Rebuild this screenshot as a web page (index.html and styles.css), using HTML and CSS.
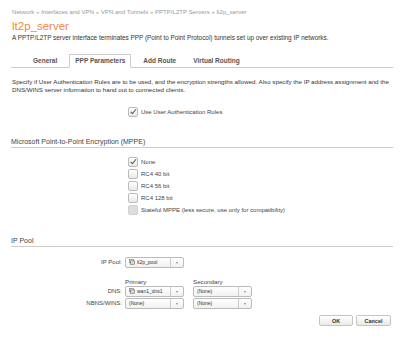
FILE: index.html
```html
<!DOCTYPE html>
<html>
<head>
<meta charset="utf-8">
<link rel="stylesheet" href="styles.css">
</head>
<body>
<div class="page">
  <div class="crumbs">Network <span class="sep">»</span> Interfaces and VPN <span class="sep">»</span> VPN and Tunnels <span class="sep">»</span> PPTP/L2TP Servers <span class="sep">»</span> lt2p_server</div>
  <h1 class="title">lt2p_server</h1>
  <p class="desc">A PPTP/L2TP server interface terminates PPP (Point to Point Protocol) tunnels set up over existing IP networks.</p>

  <div class="tabs">
    <div class="tab">General</div>
    <div class="tab active">PPP Parameters</div>
    <div class="tab">Add Route</div>
    <div class="tab last">Virtual Routing</div>
  </div>

  <p class="help">Specify if User Authentication Rules are to be used, and the encryption strengths allowed. Also specify the IP address assignment and the DNS/WINS server information to hand out to connected clients.</p>

  <div class="checks first">
    <label class="check"><span class="box checked"></span>Use User Authentication Rules</label>
  </div>

  <h2 class="section mppe">Microsoft Point-to-Point Encryption (MPPE)</h2>
  <div class="checks">
    <label class="check"><span class="box checked"></span>None</label>
    <label class="check"><span class="box"></span>RC4 40 bit</label>
    <label class="check"><span class="box"></span>RC4 56 bit</label>
    <label class="check"><span class="box"></span>RC4 128 bit</label>
    <label class="check"><span class="box disabled"></span>Stateful MPPE (less secure, use only for compatibility)</label>
  </div>

  <h2 class="section pool">IP Pool</h2>
  <div class="form">
    <div class="row">
      <span class="lbl">IP Pool:</span>
      <span class="sel"><span class="val"><svg class="ico" viewBox="0 0 8 8"><rect x="0.5" y="0.5" width="5.5" height="4.5" fill="#eee" stroke="#777" stroke-width="0.8"/><rect x="2" y="2.5" width="5.5" height="4.5" fill="#ddd" stroke="#666" stroke-width="0.8"/></svg>lt2p_pool</span><span class="arr"></span></span>
    </div>
    <div class="row heads">
      <span class="lbl"></span>
      <span class="colhead">Primary</span>
      <span class="colhead">Secondary</span>
    </div>
    <div class="row tight">
      <span class="lbl">DNS:</span>
      <span class="sel"><span class="val"><svg class="ico" viewBox="0 0 8 8"><rect x="0.5" y="0.5" width="5.5" height="4.5" fill="#eee" stroke="#777" stroke-width="0.8"/><rect x="2" y="2.5" width="5.5" height="4.5" fill="#ddd" stroke="#666" stroke-width="0.8"/></svg>wan1_dns1</span><span class="arr"></span></span>
      <span class="sel"><span class="val">(None)</span><span class="arr"></span></span>
    </div>
    <div class="row tight">
      <span class="lbl">NBNS/WINS:</span>
      <span class="sel"><span class="val">(None)</span><span class="arr"></span></span>
      <span class="sel"><span class="val">(None)</span><span class="arr"></span></span>
    </div>
  </div>

  <div class="buttons">
    <button class="btn ok">OK</button>
    <button class="btn">Cancel</button>
  </div>
</div>
</body>
</html>
```

FILE: styles.css
```css
html, body {
  margin: 0;
  padding: 0;
  background: #fff;
}
body {
  font-family: "Liberation Sans", Arial, sans-serif;
  color: #333;
  font-size: 6px;
}
.page {
  padding: 8px 7px 0 12px;
}
.crumbs {
  font-size: 6.1px;
  color: #999;
  line-height: 7px;
}
.crumbs .sep {
  color: #aaa;
}
.title {
  margin: 4px 0 0 0;
  font-size: 11.5px;
  font-weight: normal;
  color: #f0883a;
  line-height: 14px;
}
.desc {
  margin: 1px 0 0 0;
  font-size: 6.4px;
  line-height: 8px;
  color: #333;
}
.tabs {
  margin: 12px 0 0 -1px;
  display: flex;
  border-bottom: 1px solid #ccc;
  height: 13px;
  padding-left: 22px;
  gap: 12px;
}
.tab {
  font-size: 6.5px;
  font-weight: bold;
  color: #555;
  line-height: 13px;
  padding: 0;
}
.tab.active {
  border: 1px solid #ccc;
  border-bottom: 1px solid #fff;
  background: #fff;
  line-height: 12px;
  height: 12px;
  padding: 0 5px;
  margin-bottom: -1px;
}
.tab.last {
  margin-left: 5px;
}
.help {
  margin: 10px 0 0 0;
  font-size: 6.2px;
  line-height: 8px;
  color: #333;
}
.checks {
  display: flex;
  flex-direction: column;
  padding-left: 116px;
  gap: 3px;
}
.checks.first {
  margin-top: 13px;
}
.check {
  display: flex;
  align-items: center;
  gap: 3px;
  height: 9px;
  font-size: 6px;
  color: #444;
}
.box {
  width: 8px;
  height: 8px;
  border: 1px solid #bbb;
  border-radius: 2px;
  background: linear-gradient(#fff, #e8e8e8);
  position: relative;
  flex: none;
}
.box.checked::after {
  content: "";
  position: absolute;
  left: 2.5px;
  top: 0.5px;
  width: 2px;
  height: 4.5px;
  border: solid #555;
  border-width: 0 1.2px 1.2px 0;
  transform: rotate(40deg);
}
.box.disabled {
  background: #ddd;
  border-color: #d0d0d0;
}
.section {
  margin: 21px 0 0 -1px;
  font-size: 7px;
  font-weight: normal;
  color: #444;
  line-height: 9px;
  border-bottom: 1px solid #ccc;
  padding-bottom: 1px;
}
.section + .checks {
  margin-top: 9px;
}
.section.pool {
  margin-top: 22px;
}
.form {
  margin-top: 9px;
  display: flex;
  flex-direction: column;
}
.row {
  display: flex;
  align-items: center;
  gap: 9px;
  height: 12px;
}
.row .lbl {
  width: 110px;
  text-align: right;
  font-size: 6px;
  color: #444;
  margin-right: -6px;
}
.row.heads {
  margin-top: 9px;
  height: 8px;
  align-items: flex-end;
}
.colhead {
  width: 59px;
  font-size: 6.2px;
  color: #444;
  line-height: 7px;
}
.row.tight {
  margin-top: 0;
}
.sel {
  display: flex;
  width: 59px;
  height: 11px;
  box-sizing: border-box;
  border: 1px solid #bbb;
  border-radius: 2px;
  background: linear-gradient(#fff, #f1f1f1);
}
.sel .val {
  flex: 1;
  display: flex;
  align-items: center;
  gap: 2px;
  padding-left: 3px;
  font-size: 5px;
  color: #333;
}
.ico {
  width: 6px;
  height: 6px;
}
.sel .arr {
  width: 12px;
  border-left: 1px solid #ccc;
  position: relative;
}
.sel .arr::after {
  content: "";
  position: absolute;
  left: 4.5px;
  top: 4px;
  border-left: 1.5px solid transparent;
  border-right: 1.5px solid transparent;
  border-top: 2px solid #888;
}
.buttons {
  display: flex;
  justify-content: flex-end;
  gap: 3px;
  margin-top: 6px;
  padding-right: 2px;
}
.btn {
  height: 11px;
  padding: 0;
  border: 1px solid #c4c4c4;
  border-radius: 2px;
  background: linear-gradient(#fff, #e9e9e9);
  font-family: "Liberation Sans", Arial, sans-serif;
  font-size: 5.5px;
  font-weight: bold;
  color: #333;
  width: 35px;
}
.btn.ok {
  width: 34px;
}
```
